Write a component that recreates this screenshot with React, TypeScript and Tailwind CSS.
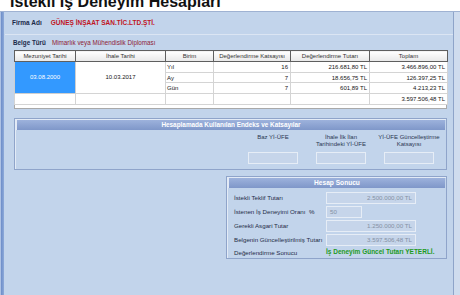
export default function App() {
  const headers = [
    "Mezuniyet Tarihi",
    "İhale Tarihi",
    "Birim",
    "Değerlendirme Katsayısı",
    "Değerlendirme Tutarı",
    "Toplam",
  ];

  const rows = [
    { birim: "Yıl", kat: "16", tutar: "216.681,80 TL", toplam: "3.466.896,00 TL" },
    { birim: "Ay", kat: "7", tutar: "18.656,75 TL", toplam: "126.397,25 TL" },
    { birim: "Gün", kat: "7", tutar: "601,89 TL", toplam: "4.213,23 TL" },
  ];

  const endeks = [
    { label: ["Baz Yİ-ÜFE"] },
    { label: ["İhale İlk İlan", "Tarihindeki Yİ-ÜFE"] },
    { label: ["Yİ-ÜFE Güncelleştirme", "Katsayısı"] },
  ];

  const sonuc = [
    { label: "İstekli Teklif Tutarı", value: "2.500.000,00 TL", width: "w-[90px]", align: "text-right" },
    { label: "İstenen İş Deneyimi Oranı  %", value: "50", width: "w-[36px]", align: "text-left" },
    { label: "Gerekli Asgari Tutar", value: "1.250.000,00 TL", width: "w-[90px]", align: "text-right" },
    { label: "Belgenin Güncelleştirilmiş Tutarı", value: "3.597.506,48 TL", width: "w-[90px]", align: "text-right" },
  ];

  return (
    <div className="w-[460px] h-[295px] overflow-hidden bg-[#c2d4eb] font-['Liberation_Sans',Arial,sans-serif] flex flex-col">
      {/* Title */}
      <div className="h-[12px] shrink-0 bg-white border-b border-[#9fb2d2] overflow-hidden">
        <div className="-mt-[6px] ml-[10px] text-[16px] font-bold leading-none text-[#111] whitespace-nowrap">
          İstekli İş Deneyim Hesapları
        </div>
      </div>

      <div className="flex-1 flex">
        {/* left frame */}
        <div className="w-[4px] border-l border-[#aec2e4] bg-gradient-to-r from-[#6d8dc8] to-[#8eaad9]" />

        <div className="flex-1 flex flex-col">
          {/* Firma */}
          <div className="h-[22px] flex items-center pl-[8px] text-[6.5px] font-bold whitespace-nowrap">
            <span className="text-[#1b2a4a]">Firma Adı</span>
            <span className="ml-[9px] text-[#c0141e]">GÜNEŞ İNŞAAT SAN.TİC.LTD.ŞTİ.</span>
          </div>

          {/* Belge panel */}
          <div className="ml-[1px] border-t border-[#dbe5f3] flex flex-col">
            <div className="h-[15px] flex items-center pl-[8px] text-[6.3px] whitespace-nowrap">
              <span className="font-bold text-[#1b2a4a]">Belge Türü</span>
              <span className="ml-[6px] text-[#8e1c34]">Mimarlık veya Mühendislik Diploması</span>
            </div>

            <div className="ml-[9px] w-[433px]">
              <table className="border-collapse table-fixed w-[433px] text-[6px] text-[#151515]">
                <colgroup>
                  <col className="w-[61px]" />
                  <col className="w-[90px]" />
                  <col className="w-[48px]" />
                  <col className="w-[77px]" />
                  <col className="w-[79px]" />
                  <col className="w-[78px]" />
                </colgroup>
                <thead>
                  <tr className="h-[11px]">
                    {headers.map((h) => (
                      <th
                        key={h}
                        className="border border-[#5f5f5f] bg-gradient-to-b from-white to-[#e8e8e8] font-normal text-[#333] p-0 leading-none whitespace-nowrap"
                      >
                        {h}
                      </th>
                    ))}
                  </tr>
                </thead>
                <tbody className="bg-white">
                  {rows.map((r, i) => (
                    <tr key={r.birim} className="h-[10.7px]">
                      {i === 0 && (
                        <>
                          <td rowSpan={3} className="bg-[#3399ff] text-white text-center border border-[#cfcfcf] p-0">
                            03.08.2000
                          </td>
                          <td rowSpan={3} className="text-center border border-[#d4d4d4] p-0">
                            10.03.2017
                          </td>
                        </>
                      )}
                      <td className="border border-[#d4d4d4] px-[1px] py-0 leading-none">{r.birim}</td>
                      <td className="border border-[#d4d4d4] px-[2px] py-0 leading-none text-right">{r.kat}</td>
                      <td className="border border-[#d4d4d4] px-[2px] py-0 leading-none text-right">{r.tutar}</td>
                      <td className="border border-[#d4d4d4] px-[2px] py-0 leading-none text-right">{r.toplam}</td>
                    </tr>
                  ))}
                  <tr className="h-[10.7px]">
                    <td className="border border-[#d4d4d4] p-0" />
                    <td className="border border-[#d4d4d4] p-0" />
                    <td className="border border-[#d4d4d4] p-0" />
                    <td className="border border-[#d4d4d4] p-0" />
                    <td className="border border-[#d4d4d4] p-0" />
                    <td className="border border-[#d4d4d4] px-[2px] py-0 leading-none text-right">3.597.506,48 TL</td>
                  </tr>
                </tbody>
              </table>
              <div className="h-[4px] bg-white border-x border-b border-[#a9a9a9]" />
            </div>
          </div>

          {/* Endeks panel */}
          <div className="ml-[10px] mt-[9px] w-[433px] h-[52px] border border-[#8fa4ca] shadow-[inset_1px_1px_0_#e3ebf6] p-[1px] flex flex-col">
            <div className="h-[10px] border-l border-[#e2e9f5] bg-gradient-to-b from-[#9db2dc] to-[#7f97c9] flex items-center justify-center text-[6.4px] font-bold text-white whitespace-nowrap">
              Hesaplamada Kullanılan Endeks ve Katsayılar
            </div>
            <div className="flex justify-end pr-[2px] mt-[4px]">
              {endeks.map((e, i) => (
                <div key={i} className="w-[68px] flex flex-col items-center">
                  <div className="h-[18px] text-[6px] leading-[7px] text-center text-[#2a3852] whitespace-nowrap">
                    {e.label.map((l) => (
                      <div key={l}>{l}</div>
                    ))}
                  </div>
                  <div className="w-[50px] h-[12px] bg-[#c6d5ea] border border-[#e6edf6]" />
                </div>
              ))}
            </div>
          </div>

          {/* Hesap Sonucu panel */}
          <div className="ml-[222px] mt-[6px] w-[221px] h-[83px] border border-[#8fa4ca] shadow-[inset_1px_1px_0_#e3ebf6] p-[1px] flex flex-col">
            <div className="h-[10px] border-l border-[#e2e9f5] bg-gradient-to-b from-[#9db2dc] to-[#7f97c9] flex items-center justify-center text-[6.6px] font-bold text-white whitespace-nowrap">
              Hesap Sonucu
            </div>
            <div className="mt-[4px] pl-[6px] flex flex-col">
              {sonuc.map((s) => (
                <div key={s.label} className="h-[14px] flex items-start">
                  <div className="w-[92px] h-[12px] flex items-center text-[6.2px] text-[#1f2c47] whitespace-pre">
                    {s.label}
                  </div>
                  <div
                    className={`${s.width} ${s.align} h-[12px] bg-[#c6d5ea] border border-[#e6edf6] px-[3px] flex items-center text-[6.2px] text-[#8591a4] leading-none`}
                  >
                    <span className="w-full">{s.value}</span>
                  </div>
                </div>
              ))}
              <div className="h-[9px] flex items-center">
                <div className="w-[92px] text-[6.2px] text-[#1f2c47] whitespace-nowrap">Değerlendirme Sonucu</div>
                <div className="text-[6.5px] font-bold text-[#1d9a1d] whitespace-nowrap">
                  İş Deneyim Güncel Tutarı YETERLİ.
                </div>
              </div>
            </div>
          </div>
        </div>

        {/* right frame */}
        <div className="w-[7px] border-l border-[#8ea4c9] bg-[#cfdcee]" />
      </div>
    </div>
  );
}
